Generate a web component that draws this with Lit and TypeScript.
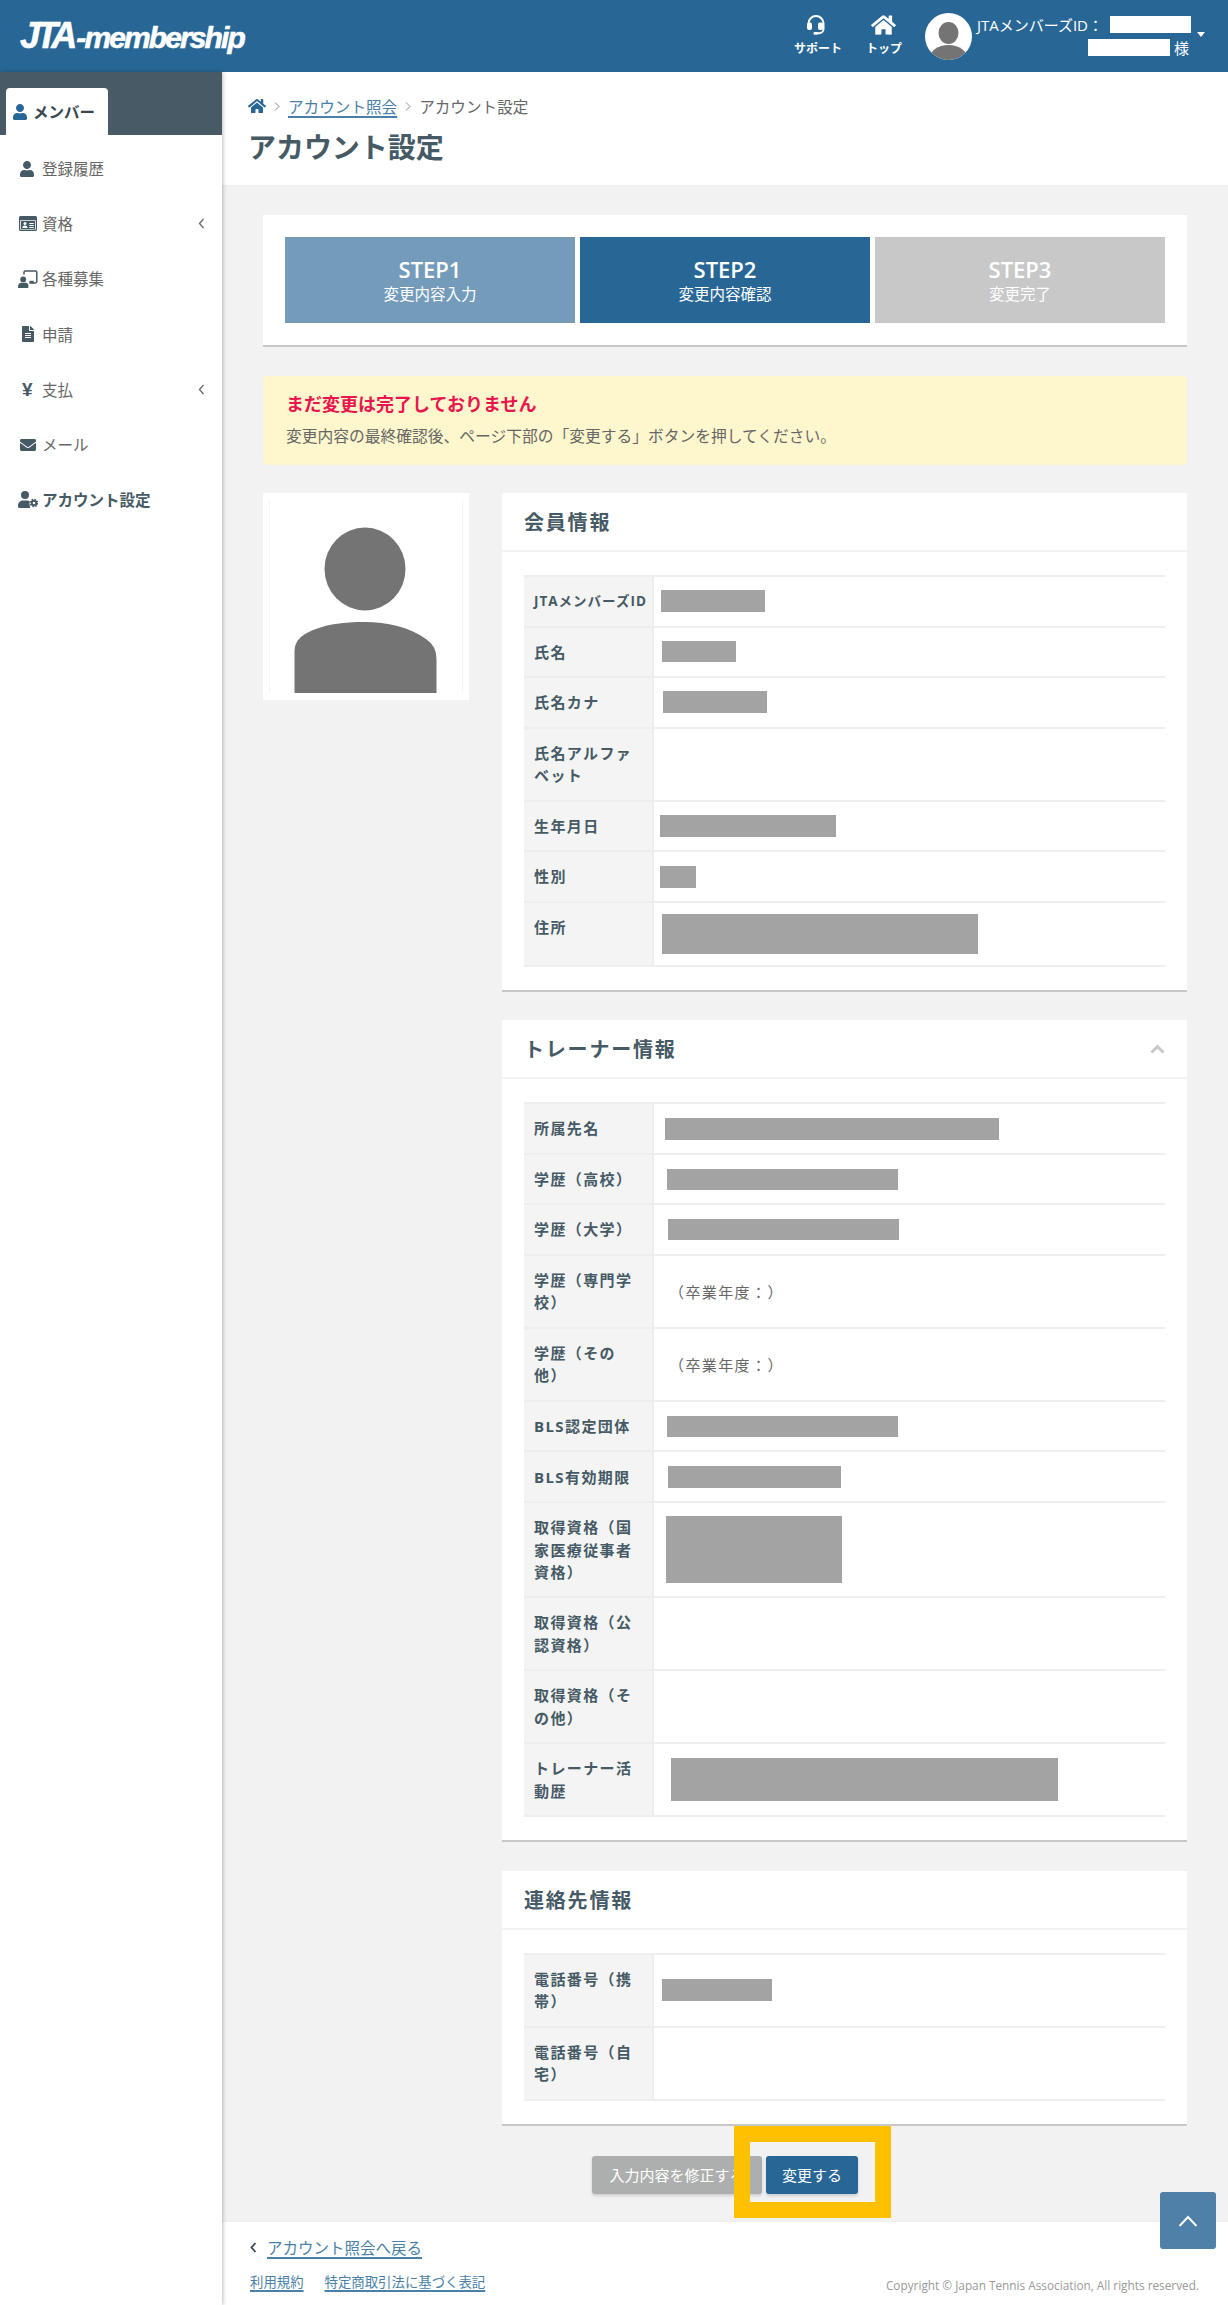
import { LitElement, html, css, svg } from "lit";
import { customElement } from "lit/decorators.js";

const P_USER = "M224 256c70.7 0 128-57.3 128-128S294.7 0 224 0 96 57.3 96 128s57.3 128 128 128zm89.6 32h-16.7c-22.2 10.2-46.9 16-72.9 16s-50.6-5.8-72.9-16h-16.7C60.2 288 0 348.2 0 422.4V464c0 26.5 21.5 48 48 48h352c26.5 0 48-21.5 48-48v-41.6c0-74.2-60.2-134.4-134.4-134.4z";
const P_HOME = "M280.37 148.26L96 300.11V464a16 16 0 0 0 16 16l112.06-.29a16 16 0 0 0 15.92-16V368a16 16 0 0 1 16-16h64a16 16 0 0 1 16 16v95.64a16 16 0 0 0 16 16.05L464 480a16 16 0 0 0 16-16V300L295.67 148.26a12.19 12.19 0 0 0-15.3 0zM571.6 251.47L488 182.56V44.05a12 12 0 0 0-12-12h-56a12 12 0 0 0-12 12v72.61L318.47 43a48 48 0 0 0-61 0L4.34 251.47a12 12 0 0 0-1.6 16.9l25.5 31A12 12 0 0 0 45.15 301l235.22-193.74a12.19 12.19 0 0 1 15.3 0L530.9 301a12 12 0 0 0 16.9-1.6l25.5-31a12 12 0 0 0-1.7-16.93z";
const P_MAIL = "M502.3 190.8c3.9-3.1 9.7-.2 9.7 4.7V400c0 26.5-21.5 48-48 48H48c-26.5 0-48-21.5-48-48V195.6c0-5 5.7-7.8 9.7-4.7 22.4 17.4 52.1 39.5 154.1 113.6 21.1 15.4 56.7 47.8 92.2 47.6 35.7.3 72-32.8 92.3-47.6 102-74.1 131.6-96.3 154-113.7zM256 320c23.2.4 56.6-29.2 73.4-41.4 132.7-96.3 142.8-104.7 173.4-128.7 5.8-4.5 9.2-11.5 9.2-18.9v-19c0-26.5-21.5-48-48-48H48C21.5 64 0 85.5 0 112v19c0 7.4 3.4 14.3 9.2 18.9 30.6 23.9 40.7 32.4 173.4 128.7 16.8 12.2 50.2 41.8 73.4 41.4z";
const P_FILE = "M224 136V0H24C10.7 0 0 10.7 0 24v464c0 13.3 10.7 24 24 24h336c13.3 0 24-10.7 24-24V160H248c-13.2 0-24-10.8-24-24zm64 236c0 6.6-5.4 12-12 12H108c-6.6 0-12-5.4-12-12v-8c0-6.6 5.4-12 12-12h168c6.6 0 12 5.4 12 12v8zm0-64c0 6.6-5.4 12-12 12H108c-6.6 0-12-5.4-12-12v-8c0-6.6 5.4-12 12-12h168c6.6 0 12 5.4 12 12v8zm0-72v8c0 6.6-5.4 12-12 12H108c-6.6 0-12-5.4-12-12v-8c0-6.6 5.4-12 12-12h168c6.6 0 12 5.4 12 12zm96-114.1v6.1H256V0h6.1c6.4 0 12.5 2.5 17 7l97.9 98c4.5 4.5 7 10.6 7 16.9z";

const iconUser = html`<svg class="ic" width="14" height="16" viewBox="0 0 448 512"><path fill="currentColor" d=${P_USER}/></svg>`;
const iconCard = html`<svg class="ic" width="18" height="15" viewBox="0 0 18 15"><path fill="currentColor" d="M1.5 0h15A1.5 1.5 0 0 1 18 1.500v12a1.500 1.500 0 0 1-1.500 1.500h-15A1.500 1.500 0 0 1 0 13.500v-12A1.500 1.500 0 0 1 1.500 0z"/><rect x="1.200" y="4.300" width="15.600" height="9.300" fill="#fff"/><rect x="2" y="5" width="14" height="8" fill="currentColor"/><circle cx="6" cy="7.600" r="1.500" fill="#fff"/><path fill="#fff" d="M3.400 12c0-1.700 1.200-2.500 2.600-2.500s2.600.8 2.600 2.500zM10.300 7h4.500v1h-4.500zM10.300 9h4.500v1h-4.500zM10.300 11h4.500v.9h-4.500z"/></svg>`;
const iconBoard = html`<svg class="ic" width="20" height="18" viewBox="0 0 20 18"><circle cx="5.200" cy="9.400" r="2.900" fill="currentColor"/><path fill="currentColor" d="M0 17c0-3 1.700-4.300 3.300-4.300h4c1.300 0 2.300.6 3 1.500v3.800H0z"/><path fill="none" stroke="currentColor" stroke-width="1.500" d="M6 4.600V2.200c0-.8.5-1.300 1.300-1.300h10.200c.8 0 1.300.5 1.300 1.300v9.400c0 .8-.5 1.300-1.300 1.300h-6"/><path fill="currentColor" d="M11.500 10.800h4.200v2.400h-4.200z"/></svg>`;
const iconFile = html`<svg class="ic" width="12" height="16" viewBox="0 0 384 512"><path fill="currentColor" d=${P_FILE}/></svg>`;
const iconMail = html`<svg class="ic" width="16" height="16" viewBox="0 0 512 512"><path fill="currentColor" d=${P_MAIL}/></svg>`;
const iconCog = html`<svg class="ic" width="20" height="17" viewBox="0 0 20 17"><circle cx="7" cy="4.100" r="4" fill="currentColor"/><path fill="currentColor" d="M0 15.200c0-3.500 2.200-5.700 4.700-5.700h4.600c.9 0 1.700.2 2.400.6-.3 1.200-.3 4.500.6 6.900H1.700C.7 17 0 16.200 0 15.200z"/><circle cx="16" cy="12" r="2.300" fill="none" stroke="currentColor" stroke-width="2"/><circle cx="16" cy="12" r="3.700" fill="none" stroke="currentColor" stroke-width="1.300" stroke-dasharray="1.500 1.400"/></svg>`;
const chevronLeft = html`<svg class="chev" width="7" height="11" viewBox="0 0 7 11"><path fill="none" stroke="currentColor" stroke-width="1.300" d="M5.500 1L1.500 5.500L5.500 10"/></svg>`;

const silhouette = svg`<ellipse cx="102" cy="76" rx="40.500" ry="41.500" fill="#747474"/><path fill="#747474" d="M31.500 200V158Q31.500 147 42 141C60 131 80 129 102 129C124 129 146 134 163 146Q173.500 153 173.500 166V200Z"/>`;

interface Row { label: string; left?: number; w?: number; h?: number; text?: string; tight?: boolean }

const member: Row[] = [
  { label: "JTAメンバーズID", left: 7, w: 104, h: 22, tight: true },
  { label: "氏名", left: 8, w: 74, h: 21 },
  { label: "氏名カナ", left: 9, w: 104, h: 22 },
  { label: "氏名アルファベット" },
  { label: "生年月日", left: 6, w: 176, h: 22 },
  { label: "性別", left: 6, w: 36, h: 22 },
  { label: "住所", left: 8, w: 316, h: 40 },
];
const trainer: Row[] = [
  { label: "所属先名", left: 11, w: 334, h: 22 },
  { label: "学歴（高校）", left: 13, w: 231, h: 21 },
  { label: "学歴（大学）", left: 14, w: 231, h: 21 },
  { label: "学歴（専門学校）", text: "（卒業年度：）" },
  { label: "学歴（その他）", text: "（卒業年度：）" },
  { label: "BLS認定団体", left: 13, w: 231, h: 21 },
  { label: "BLS有効期限", left: 14, w: 173, h: 22 },
  { label: "取得資格（国家医療従事者資格）", left: 12, w: 176, h: 67 },
  { label: "取得資格（公認資格）" },
  { label: "取得資格（その他）" },
  { label: "トレーナー活動歴", left: 17, w: 387, h: 43 },
];
const contact: Row[] = [
  { label: "電話番号（携帯）", left: 8, w: 110, h: 22 },
  { label: "電話番号（自宅）" },
];
const steps = [
  { n: "STEP1", t: "変更内容入力", c: "s1" },
  { n: "STEP2", t: "変更内容確認", c: "s2" },
  { n: "STEP3", t: "変更完了", c: "s3" },
];
const menu = [
  { i: iconUser, t: "登録履歴", pad: 20 },
  { i: iconCard, t: "資格", chev: true, pad: 19 },
  { i: iconBoard, t: "各種募集", pad: 18 },
  { i: iconFile, t: "申請", pad: 22 },
  { yen: true, t: "支払", chev: true, pad: 22 },
  { i: iconMail, t: "メール", pad: 20 },
  { i: iconCog, t: "アカウント設定", active: true, pad: 18 },
];

@customElement("app-root")
export class AppRoot extends LitElement {
  static styles = css`
    :host { display: block; position: relative; width: 1228px; height: 2305px; background: #f2f2f2; overflow: hidden;
      font-family: "Open Sans", "Noto Sans CJK JP", sans-serif; font-size: 15px; color: #666; text-spacing-trim: space-all; }
    * { box-sizing: border-box; }
    a { color: #4a7fa7; text-decoration: underline; text-underline-offset: 3px; text-decoration-thickness: 1.5px; }
    svg { display: block; flex: none; }

    .top { height: 72px; background: #286795; color: #fff; display: flex; align-items: center; justify-content: space-between; }
    .logo { margin-left: 20px; font-family: "Liberation Sans", sans-serif; font-weight: 700; font-style: italic; color: #fff; white-space: nowrap; -webkit-text-stroke: 0.6px #fff; line-height: 1; }
    .logo b { font-size: 36px; letter-spacing: -4px; }
    .logo span { font-size: 30px; letter-spacing: -1.900px; margin-left: 3px; }
    .tools { display: flex; align-items: center; padding-right: 23px; height: 72px; }
    .tool { display: flex; flex-direction: column; align-items: center; font-size: 12px; font-weight: 700; line-height: 16px; gap: 5px; margin-top: -1px; }
    .tool.support { margin-right: 24px; }
    .tool.support svg { margin-right: 3px; }
    .tool.home { margin-right: 23px; }
    .avatar { width: 47px; height: 47px; border-radius: 50%; background: #fff; overflow: hidden; margin-right: 5px; }
    .who { width: 214px; display: flex; flex-direction: column; align-items: flex-end; gap: 5px; font-size: 15px; line-height: 18px; white-space: nowrap; }
    .who div { display: flex; align-items: center; }
    .who .b1 { width: 81px; height: 17px; background: #fff; margin-left: 7px; }
    .who .b2 { width: 82px; height: 17px; background: #fff; margin-right: 4px; }
    .who .l2 { margin-right: 2px; }
    .caret { width: 0; height: 0; border: 4px solid transparent; border-top: 5px solid #fff; border-bottom: 0; margin-left: 6px; margin-top: -4px; }

    .page { display: flex; height: 2233px; }
    .side { width: 222px; flex: none; background: #fff; box-shadow: 1px 0 4px rgba(0,0,0,.25); position: relative; z-index: 1; }
    .tabbar { height: 63px; background: #485a66; padding: 16px 0 0 6px; }
    .tab { width: 102px; height: 47px; background: #fff; border-radius: 4px 4px 0 0; display: flex; align-items: center; gap: 6px; padding-left: 7px; color: #38474f; font-weight: 700; font-size: 15.500px; }
    .tab .ic { color: #286795; }
    .menu { padding-top: 6px; }
    .mi { height: 55.200px; display: flex; align-items: center; position: relative; color: #666; font-size: 15.500px; }
    .mi .ic, .yen { color: #455a64; }
    .mi .slot { width: 42px; flex: none; display: flex; align-items: center; }
    .mi.active { color: #455a64; font-weight: 700; }
    .yen { font-weight: 700; font-size: 19px; font-family: "Liberation Sans", sans-serif; line-height: 1; }
    .chev { position: absolute; left: 198px; top: 22px; color: #666; }

    .main { flex: 1; min-width: 0; display: flex; flex-direction: column; position: relative; }
    .crumbs { flex: none; height: 114px; background: #fff; padding: 23px 0 0 26px; border-bottom: 1px solid #eee; }
    .bc { display: flex; align-items: center; gap: 6px; height: 22px; font-size: 15.600px; color: #666; }
    .bc .home { color: #286795; }
    .bc .sep { width: 6px; height: 9px; margin: 0 2px; color: #888; }
    h1 { margin: 10px 0 0; font-size: 28px; line-height: 40px; font-weight: 700; color: #455a64; letter-spacing: -0.050px; }

    .body { flex: none; padding: 29px 41px 0; display: flex; flex-direction: column; }
    .steps { flex: none; background: #fff; padding: 22px; height: 132px; border-bottom: 2px solid #c8c8c8; display: flex; gap: 5px; }
    .step { flex: 1; height: 86px; display: flex; flex-direction: column; align-items: center; justify-content: center; color: #fff; }
    .step b { font-size: 22px; font-weight: 600; line-height: 28px; }
    .step span { font-size: 15.500px; line-height: 22px; }
    .s1 { background: #749cba; }
    .s2 { background: #286795; }
    .s3 { background: #c8c8c8; }
    .alert { flex: none; margin-top: 29px; height: 89px; background: #fef6cd; border-radius: 4px; padding: 15px 23px; }
    .alert b { display: block; font-size: 18px; line-height: 26px; color: #e8154e; font-weight: 700; }
    .alert p { margin: 8px 0 0; font-size: 15.750px; line-height: 22px; color: #666; }

    .cols { margin-top: 28px; display: grid; grid-template-columns: 206px 685px; gap: 33px; align-items: start; }
    .photo { background: #fff; height: 207px; }
    .stack { display: flex; flex-direction: column; gap: 28.500px; }
    .panel { background: #fff; border-bottom: 2px solid #c8c8c8; }
    .phead { height: 59px; border-bottom: 2px solid #f2f2f2; display: flex; align-items: center; justify-content: space-between; padding: 0 22px; }
    .phead h2 { margin: 0; font-size: 20px; font-weight: 700; letter-spacing: 1.800px; color: #455a64; }
    .phead .up { color: #c8c8c8; }
    .tbl { margin: 23px 22px; border-top: 2px solid #eee; }
    .row { display: flex; border-bottom: 2px solid #eee; }
    .row .lb { width: 130px; flex: none; background: #f4f4f4; border-right: 2px solid #eee; padding: 13.080px 6px 13.080px 10px; font-size: 15px; line-height: 22.400px; font-weight: 700; letter-spacing: 1.400px; color: #455a64; }
    .row .lb.tight { font-size: 13.500px; letter-spacing: 1px; padding-right: 0; white-space: nowrap; }
    .row .val { flex: 1; display: flex; align-items: center; padding: 11px 0; color: #666; font-size: 15px; letter-spacing: 1.400px; }
    .bar { background: #a3a3a3; }
    .txt { margin-left: 15px; }

    .btns { display: flex; justify-content: center; gap: 4px; margin-top: 30px; }
    .btn { height: 38px; border: 0; border-radius: 3px; color: #fff; font: inherit; font-size: 15px; display: flex; align-items: center; justify-content: center; box-shadow: 0 2px 3px rgba(0,0,0,.15); }
    .btn.g { width: 170px; background: #adafae; }
    .btn.p { width: 92px; background: #286795; }
    .mark { position: absolute; left: 512px; top: 2054px; width: 157px; height: 92px; border: 16px solid #ffc000; pointer-events: none; }

    .foot { flex: none; height: 84px; background: #fff; border-top: 1px solid #eee; padding: 13px 28px 0; position: relative; margin-top: 27px; }
    .back { display: flex; align-items: center; gap: 10px; height: 22px; font-size: 15.500px; margin-top: 2px; }
    .back svg { color: #38474f; }
    .links { display: flex; gap: 21px; margin-top: 13px; font-size: 13.400px; line-height: 20px; }
    .copy { position: absolute; right: 29px; top: 54px; font-size: 11.800px; line-height: 18px; color: #999; }
    .totop { position: absolute; left: 938px; top: 2120px; width: 56px; height: 57px; border-radius: 3px; background: #4f81a8; display: flex; align-items: center; justify-content: center; z-index: 2; }
  `;

  private rows(rows: Row[]) {
    return html`<div class="tbl">${rows.map((r) => html`
      <div class="row">
        <div class="lb ${r.tight ? "tight" : ""}">${r.label}</div>
        <div class="val">
          ${r.w ? html`<div class="bar" style="margin-left:${r.left}px;width:${r.w}px;height:${r.h}px"></div>` : ""}
          ${r.text ? html`<span class="txt">${r.text}</span>` : ""}
        </div>
      </div>`)}</div>`;
  }

  private panel(title: string, rows: Row[], up = false) {
    return html`<section class="panel">
      <div class="phead"><h2>${title}</h2>
        ${up ? html`<svg class="up" width="15" height="10" viewBox="0 0 15 10"><path fill="none" stroke="currentColor" stroke-width="3" d="M1.500 8.500L7.500 2.500L13.500 8.500"/></svg>` : ""}
      </div>
      ${this.rows(rows)}
    </section>`;
  }

  render() {
    return html`
      <header class="top">
        <div class="logo"><b>JTA</b><span>-membership</span></div>
        <div class="tools">
          <div class="tool support">
            <svg width="22" height="22" viewBox="0 0 22 22"><path fill="none" stroke="#fff" stroke-width="2" d="M3.500 12V9.500a7.500 7.500 0 0 1 15 0V15c0 2.500-2 4.300-4.500 4.300h-2"/><rect x="2" y="8.500" width="5" height="7.500" rx="2" fill="#fff"/><rect x="13" y="8.500" width="5" height="7.500" rx="2" fill="#fff"/><rect x="8.500" y="18" width="4.500" height="2.800" rx="1.200" fill="#fff"/></svg>
            <span>サポート</span>
          </div>
          <div class="tool home">
            <svg width="25" height="22" viewBox="0 0 576 512"><path fill="#fff" d=${P_HOME}/></svg>
            <span>トップ</span>
          </div>
          <div class="avatar">
            <svg width="47" height="47" viewBox="0 0 47 47"><ellipse cx="23.500" cy="20" rx="10" ry="11" fill="#747474"/><ellipse cx="23.500" cy="46" rx="19" ry="14" fill="#747474"/></svg>
          </div>
          <div class="who">
            <div>JTAメンバーズID：<i class="b1"></i></div>
            <div class="l2"><i class="b2"></i>様</div>
          </div>
          <span class="caret"></span>
        </div>
      </header>
      <div class="page">
        <aside class="side">
          <div class="tabbar"><div class="tab">${iconUser}メンバー</div></div>
          <nav class="menu">
            ${menu.map((m) => html`<div class="mi ${m.active ? "active" : ""}">
              <span class="slot" style="padding-left:${m.pad}px">${m.yen ? html`<span class="yen">¥</span>` : m.i}</span>
              ${m.t}${m.chev ? chevronLeft : ""}
            </div>`)}
          </nav>
        </aside>
        <main class="main">
          <div class="crumbs">
            <div class="bc">
              <svg class="home" width="18" height="16" viewBox="0 0 576 512"><path fill="currentColor" d=${P_HOME}/></svg>
              <svg class="sep" viewBox="0 0 6 9"><path fill="none" stroke="currentColor" d="M1 .5L5 4.500L1 8.500"/></svg>
              <a>アカウント照会</a>
              <svg class="sep" viewBox="0 0 6 9"><path fill="none" stroke="currentColor" d="M1 .5L5 4.500L1 8.500"/></svg>
              <span>アカウント設定</span>
            </div>
            <h1>アカウント設定</h1>
          </div>
          <div class="body">
            <div class="steps">
              ${steps.map((s) => html`<div class="step ${s.c}"><b>${s.n}</b><span>${s.t}</span></div>`)}
            </div>
            <div class="alert">
              <b>まだ変更は完了しておりません</b>
              <p>変更内容の最終確認後、ページ下部の「変更する」ボタンを押してください。</p>
            </div>
            <div class="cols">
              <div class="photo">
                <svg width="206" height="207" viewBox="0 0 206 207"><path fill="none" stroke="#f5f5f5" d="M6.500 7V200M199.500 7V200"/>${silhouette}</svg>
              </div>
              <div class="stack">
                ${this.panel("会員情報", member)}
                ${this.panel("トレーナー情報", trainer, true)}
                ${this.panel("連絡先情報", contact)}
              </div>
            </div>
            <div class="btns">
              <button class="btn g">入力内容を修正する</button>
              <button class="btn p">変更する</button>
            </div>
          </div>
          <footer class="foot">
            <div class="back">
              <svg width="7" height="11" viewBox="0 0 7 11"><path fill="none" stroke="currentColor" stroke-width="1.800" d="M5.500 1L1.500 5.500L5.500 10"/></svg>
              <a>アカウント照会へ戻る</a>
            </div>
            <div class="links"><a>利用規約</a><a>特定商取引法に基づく表記</a></div>
            <div class="copy">Copyright © Japan Tennis Association, All rights reserved.</div>
          </footer>
          <div class="mark"></div>
          <div class="totop"><svg width="20" height="12" viewBox="0 0 20 12"><path fill="none" stroke="#fff" stroke-width="2" d="M1.500 11L10 2L18.500 11"/></svg></div>
        </main>
      </div>
    `;
  }
}
